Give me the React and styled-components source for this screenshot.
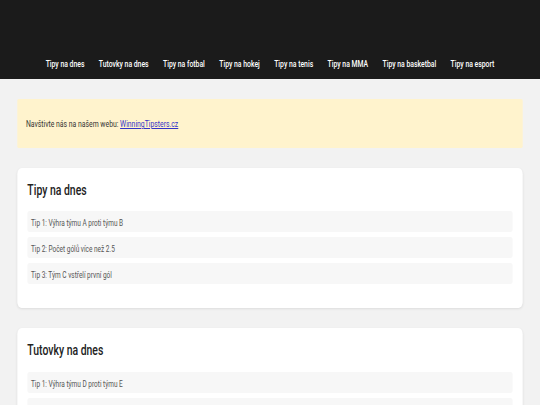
import React from 'react'
import styled, { createGlobalStyle } from 'styled-components'

const GlobalStyle = createGlobalStyle`
    html, body {
        margin:0;
        padding:0;
        overflow:hidden;
        background:#f2f2f2;
    }
    body{
        font-family: Roboto, "Liberation Sans", sans-serif;
    }
`

// the shot is narrower than the page it came from, so the page is laid out
// at 750px and squeezed to the 540px window
const Stage = styled.div`
    width:750px;
    transform:scaleX(0.72);
    transform-origin:0 0;
`

const Header = styled.header`
    background:#1b1b1b;
    padding:55px 0 6px;
`

const Nav = styled.nav`
    display:flex;
    justify-content:center;
    gap:20px;
`

const NavLink = styled.a`
    color:#fff;
    font-size:9.5px;
    font-weight:500;
    line-height:18px;
    text-decoration:none;
`

const Main = styled.main`
    display:flex;
    flex-direction:column;
    gap:20px;
    padding:20px 24px;
`

const Notice = styled.div`
    background:#fff3cd;
    padding:19px 12px;
    font-size:9.5px;
    line-height:11px;
    color:#333;
    border-radius:2px;
`

const NoticeLink = styled.a`
    color:#3434c8;
    text-decoration:underline;
`

const Card = styled.section`
    background:#fff;
    border-radius:6px;
    box-shadow:0 1px 3px rgba(0,0,0,0.09);
    padding:14px 14px 24px;
`

const Title = styled.h2`
    margin:0 0 12px;
    font-size:14.5px;
    font-weight:500;
    line-height:17.4px;
    color:#222;
`

const TipList = styled.ul`
    list-style:none;
    margin:0;
    padding:0;
    display:flex;
    flex-direction:column;
    gap:5px;
`

const Tip = styled.li`
    background:#f7f7f7;
    border-radius:3px;
    padding:7px 5px 3px;
    font-size:9px;
    line-height:11px;
    color:#555;
`

const menu = ["Tipy na dnes","Tutovky na dnes","Tipy na fotbal","Tipy na hokej","Tipy na tenis","Tipy na MMA","Tipy na basketbal","Tipy na esport"]

const sections = [
    {
        title:"Tipy na dnes",
        tips:["Tip 1: Výhra týmu A proti týmu B","Tip 2: Počet gólů více než 2.5","Tip 3: Tým C vstřelí první gól"]
    },
    {
        title:"Tutovky na dnes",
        tips:["Tip 1: Výhra týmu D proti týmu E","Tip 2: Počet gólů více než 1.5","Tip 3: Tým F vstřelí první gól"]
    }
]

const App = () => {
    return (
        <>
        <GlobalStyle/>
        <Stage>
            <Header>
                <Nav>
                    {
                        menu.map((m,i)=>(
                            <NavLink key={`nav-${i}`} href="#">{m}</NavLink>
                        ))
                    }
                </Nav>
            </Header>
            <Main>
                <Notice>
                    Navštivte nás na našem webu: <NoticeLink href="#">WinningTipsters.cz</NoticeLink>
                </Notice>
                {
                    sections.map((s,i)=>(
                        <Card key={`sec-${i}`}>
                            <Title>{s.title}</Title>
                            <TipList>
                                {s.tips.map((t,j)=>(
                                    <Tip key={`tip-${i}-${j}`}>{t}</Tip>
                                ))}
                            </TipList>
                        </Card>
                    ))
                }
            </Main>
        </Stage>
        </>
    )
}

export default App
